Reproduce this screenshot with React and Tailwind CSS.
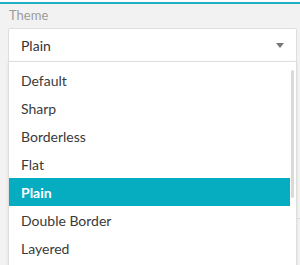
export default function App() {
  const items = ["Default", "Sharp", "Borderless", "Flat", "Plain", "Double Border", "Layered"];
  return (
    <div className="relative w-[300px] h-[265px] overflow-hidden bg-[#f2f2f2] font-['Lato',sans-serif]">
      <div className="h-[2px] bg-white" />
      <div className="h-[2px] bg-[#1fb0c3]" />
      <div className="pl-[8px]">
        <div className="h-[22px] pt-[3px] pl-[1px] text-[13px] leading-[16px] text-[#9c9c9c]">Theme</div>
        <div className="mt-[2px] w-[289px] h-[34px] bg-white border border-[#dedede] rounded-[2px] flex items-center justify-between pl-[12px] pr-[12px]">
          <span className="text-[14px] text-[#333]">Plain</span>
          <svg width="8" height="5" viewBox="0 0 8 5"><path d="M0 0H8L4 5Z" fill="#777" /></svg>
        </div>
        <div className="mt-[156px] h-[1px] bg-[#dcdcdc]" />
      </div>
      <div className="absolute left-[8px] top-[61px] w-[289px] h-[220px] bg-white border border-[#dedede] pt-[4px] shadow-[0_1px_3px_rgba(0,0,0,0.08)]">
        {items.map((t) => (
          <div
            key={t}
            className={
              "h-[28px] w-[281px] flex items-center pl-[12px] text-[14px] " +
              (t === "Plain" ? "bg-[#06adc1] text-white font-bold" : "text-[#3a3a3a]")
            }
          >
            {t}
          </div>
        ))}
        <div className="absolute right-[2px] top-[8px] w-[3px] h-[128px] rounded-[2px] bg-[#dadada]" />
      </div>
    </div>
  );
}
